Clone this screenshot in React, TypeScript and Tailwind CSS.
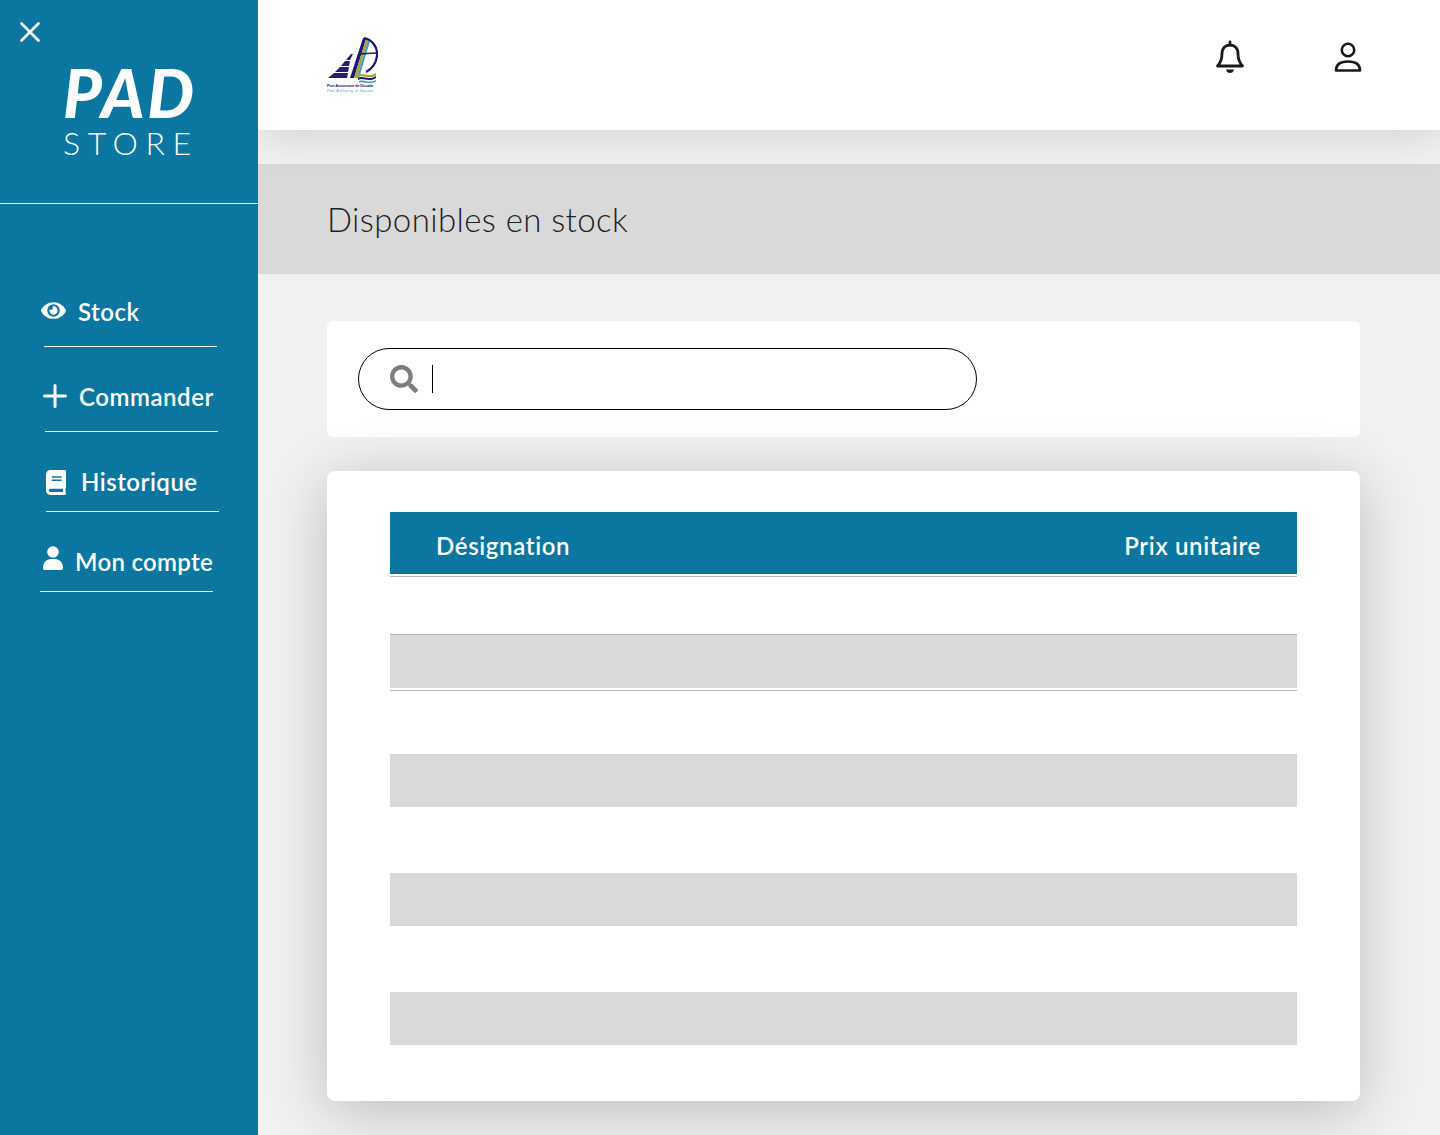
import { FaBook, FaEye, FaSearch } from "react-icons/fa";

const font = "font-['Lato','Noto_Sans',sans-serif]";

function NavItem({ icon, label, className, labelClass }: { icon: React.ReactNode; label: string; className: string; labelClass: string }) {
  return (
    <div className={className}>
      <div className="flex items-center h-[30px]">
        {icon}
        <span className={`text-[24px] font-semibold text-white leading-none ${labelClass}`}>{label}</span>
      </div>
    </div>
  );
}

function Logo() {
  return (
    <svg width="52" height="56" viewBox="0 0 52 56" className="block">
      {/* sail bars */}
      <path d="M27 17 L24 23 L20 23 L25 17 Z M19 24 L24 24 L23 29 L15 29 Z M14 30 L23 30 L22 35 L9 35 Z M8 36 L22 36 L21 41 L2 41 Z" fill="#2a1a7a" />
      {/* mast stripes */}
      <path d="M37 1 L40 2 L28 41 L24 41 Z" fill="#1f1678" />
      <path d="M40 2 L42 3 L31 41 L28 41 Z" fill="#a8a62a" />
      <path d="M42 3 L44 4 L33 41 L31 41 Z" fill="#3aa0c0" />
      {/* letter bowl */}
      <path d="M38 1 C47 3 52 11 51 19 C50 27 46 32 40 35" fill="none" stroke="#1f1678" strokeWidth="2.2" />
      <path d="M33 17 L50 16" stroke="#1f1678" strokeWidth="1.6" />
      {/* waves */}
      <path d="M32 38 C37 35 42 41 50 36 L50 38.5 C42 43 37 37 32 40.5 Z" fill="#a8a62a" />
      <path d="M32 41 C37 38 42 44 50 39 L50 41 C42 46 37 40 32 43 Z" fill="#1f1678" />
      <path d="M33 44 C38 42 43 47 50 43 L50 44.5 C43 48 38 44 33 45.5 Z" fill="#3aa0c0" />
      <text x="1" y="50" fontSize="4" fontWeight="700" fill="#1f1678" fontFamily="Liberation Sans, sans-serif" textLength="46">Port Autonome de Douala</text>
      <text x="1" y="55" fontSize="3.5" fill="#3aa0c0" fontFamily="Liberation Sans, sans-serif" textLength="46">Port Authority of Douala</text>
    </svg>
  );
}

function StockRow({ className }: { className: string }) {
  return <div className={`h-[53px] bg-[#d9d9d9] ${className}`} />;
}

export default function App() {
  return (
    <div className={`flex h-[1135px] w-[1440px] overflow-hidden bg-[#f1f1f1] ${font}`}>
      <aside className="relative z-20 w-[258px] shrink-0 bg-[#0b77a1]">
        <div className="h-[204px] border-b border-white pt-[22px]">
          <svg className="ml-[20px] block" width="20" height="20" viewBox="0 0 20 20" stroke="white" strokeWidth="2.6" strokeLinecap="round">
            <path d="M1.5 1.5 L18.5 18.5 M18.5 1.5 L1.5 18.5" />
          </svg>
          <div className="mt-[21px] ml-[63px] text-[66px] leading-[60px] font-black italic tracking-[2.5px] text-white">PAD</div>
          <div className="ml-[63px] mt-[4px] text-[32px] leading-[32px] font-light tracking-[7.6px] text-white">STORE</div>
        </div>
        <NavItem
          className="mt-[93px] ml-[41px]"
          label="Stock"
          labelClass="ml-[12px] tracking-[0.5px]"
          icon={<FaEye className="mt-[-4px] text-white" size={25} />}
        />
        <div className="mt-[19px] ml-[44px] h-px w-[173px] bg-white" />
        <NavItem
          className="mt-[35px] ml-[43px]"
          label="Commander"
          labelClass="ml-[12px] tracking-[0.55px]"
          icon={
            <svg className="mt-[-2px]" width="24" height="24" viewBox="0 0 24 24" stroke="white" strokeWidth="3" strokeLinecap="round">
              <path d="M12 1.5 V22.5 M1.5 12 H22.5" />
            </svg>
          }
        />
        <div className="mt-[19px] ml-[45px] h-px w-[173px] bg-white" />
        <NavItem
          className="mt-[35px] ml-[46px]"
          label="Historique"
          labelClass="ml-[15px] tracking-[0.5px]"
          icon={<FaBook className="h-[25px] w-[20px] text-white" preserveAspectRatio="none" />}
        />
        <div className="mt-[14px] ml-[46px] h-px w-[173px] bg-white" />
        <NavItem
          className="mt-[35px] ml-[43px]"
          label="Mon compte"
          labelClass="ml-[12px] tracking-[0.3px]"
          icon={
            <svg className="mt-[-9px]" width="20" height="24" viewBox="0 0 20 24" fill="white">
              <circle cx="10" cy="6" r="5.8" />
              <path d="M0 22 C0 16.5 3.5 13 8 13 L12 13 C16.5 13 20 16.5 20 22 C20 23.4 19.4 24 18 24 L2 24 C0.6 24 0 23.4 0 22 Z" />
            </svg>
          }
        />
        <div className="mt-[14px] ml-[40px] h-px w-[173px] bg-white" />
      </aside>

      <main className="flex-1 min-w-0">
        <header className="relative z-10 flex h-[130px] items-center justify-between bg-white pl-[68px] pr-[76px] shadow-[0_4px_40px_rgba(0,0,0,0.14)]">
          <div className="mt-[-1px]"><Logo /></div>
          <div className="flex items-center gap-[87px] mt-[-16px]">
            <svg width="30" height="34" viewBox="0 0 30 34" fill="none" stroke="#1a1a1a" strokeWidth="2.8" strokeLinejoin="round" strokeLinecap="round">
              <path d="M15 2 V5" />
              <path d="M7 14 C7 8 10.5 5 15 5 C19.5 5 23 8 23 14 C23 19 24 22 27.5 26 H2.5 C6 22 7 19 7 14 Z" />
              <path d="M11 29.5 H19 C18.5 32 17 33 15 33 C13 33 11.5 32 11 29.5 Z" fill="#1a1a1a" stroke="none" />
            </svg>
            <svg width="32" height="32" viewBox="0 0 32 32" fill="none" stroke="#1a1a1a" strokeWidth="2.6">
              <circle cx="16" cy="9" r="6.2" />
              <path d="M4 29.5 C4 23 9 20.5 16 20.5 C23 20.5 28 23 28 29.5 Z" strokeLinejoin="round" />
            </svg>
          </div>
        </header>

        <div className="mt-[34px] flex h-[110px] items-center bg-[#d9d9d9] pl-[69px] pt-[2px]">
          <h1 className="text-[33px] font-light tracking-[0.4px] text-[#222]">Disponibles en stock</h1>
        </div>

        <section className="mt-[47px] ml-[69px] flex h-[116px] w-[1033px] items-center rounded-[6px] bg-white pl-[31px]">
          <div className="flex h-[62px] w-[619px] items-center rounded-[31px] border border-black pl-[31px]">
            <FaSearch className="text-[#7d7d7d]" size={28} />
            <div className="ml-[14px] h-[28px] w-px bg-black" />
          </div>
        </section>

        <section className="mt-[34px] ml-[69px] h-[630px] w-[1033px] rounded-[8px] bg-white px-[63px] pt-[41px] shadow-[0_10px_60px_rgba(0,0,0,0.22)]">
          <div className="flex h-[62px] items-center justify-between bg-[#0b77a1] pl-[46px] pr-[36px] pt-[6px] text-[24px] font-semibold tracking-[0.65px] text-white">
            <span>Désignation</span>
            <span>Prix unitaire</span>
          </div>
          <div className="mt-[2px] h-px bg-[#b8b8b8]" />
          <div className="mt-[57px] h-px bg-[#b0b0b0]" />
          <StockRow className="" />
          <div className="mt-[2px] h-px bg-[#b8b8b8]" />
          <StockRow className="mt-[63px]" />
          <StockRow className="mt-[66px]" />
          <StockRow className="mt-[66px]" />
        </section>
      </main>
    </div>
  );
}
